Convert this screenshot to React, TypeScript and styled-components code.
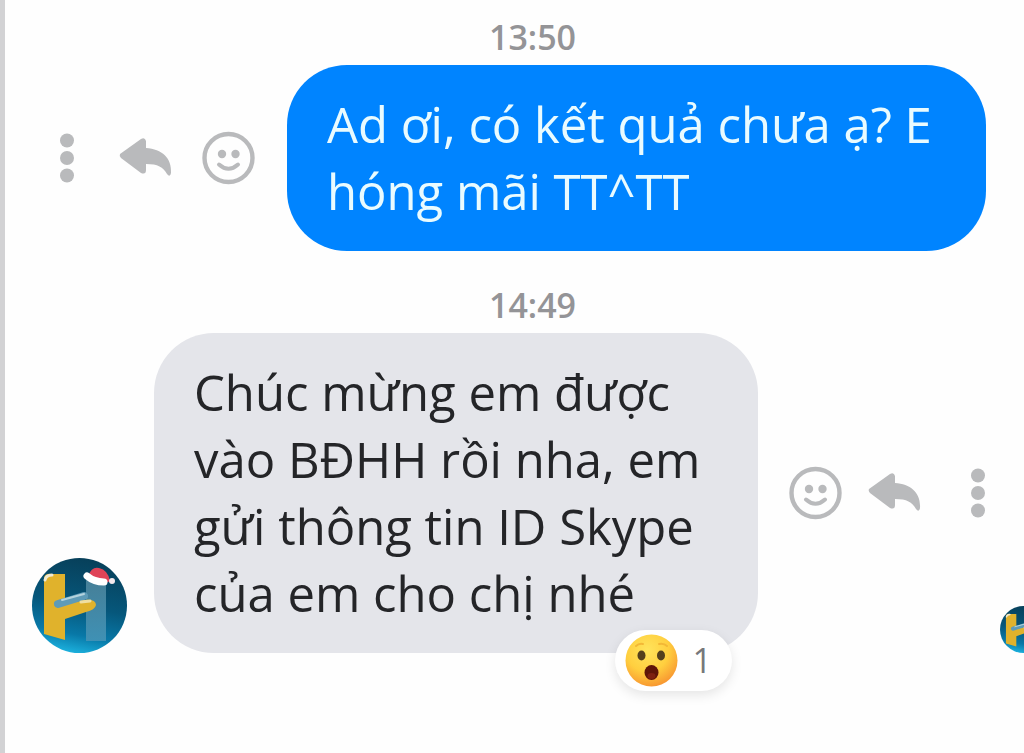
import React from "react";
import styled, { createGlobalStyle } from "styled-components";

const GlobalStyle = createGlobalStyle`
  *, *::before, *::after { box-sizing: border-box; }
  body {
    margin: 0;
    background: #fefefe;
    font-family: "Open Sans", "Noto Sans", sans-serif;
  }
`;

const Thread = styled.main`
  min-height: 100vh;
  padding-top: 11px;
  border-left: 5px solid #d2d2d4;
  overflow: hidden;
`;

const Timestamp = styled.time`
  display: block;
  padding-left: 36px;
  margin-bottom: 2px;
  color: #949497;
  font-size: 34px;
  font-weight: 600;
  line-height: 52px;
  text-align: center;
`;

const Row = styled.div<{ $own?: boolean }>`
  display: flex;
  align-items: flex-end;
  padding: ${(p) => (p.$own ? "0 38px 0 35px" : "0 0 0 27px")};
  margin-bottom: 28px;
`;

const Bubble = styled.div<{ $own?: boolean }>`
  position: relative;
  flex: 1;
  min-width: 0;
  padding: 26px 40px;
  border-radius: 60px;
  background: ${(p) => (p.$own ? "#0084ff" : "#e4e5ea")};
  color: ${(p) => (p.$own ? "#e9fbff" : "#242528")};
`;

const Message = styled.p`
  margin: 0;
  font-size: 49px;
  font-weight: 400;
  line-height: 67px;
`;

const Actions = styled.div<{ $own?: boolean }>`
  display: flex;
  flex: none;
  flex-direction: ${(p) => (p.$own ? "row-reverse" : "row")};
  align-self: center;
  gap: 27px;
  margin: ${(p) => (p.$own ? "0 31px 0 0" : "0 0 0 31px")};
`;

const IconButton = styled.button`
  display: block;
  width: 54px;
  height: 54px;
  padding: 0;
  border: 0;
  background: none;
  color: #b9babc;
  cursor: pointer;

  svg { display: block; }
`;

const Avatar = styled.svg`
  flex: none;
  display: block;
  width: 95px;
  height: 95px;
  margin-right: 27px;
`;

const SeenAvatar = styled(Avatar)`
  width: 47px;
  height: 47px;
  margin: 0 -23px 0 -5px;
`;

const Reaction = styled.button`
  position: absolute;
  right: 26px;
  bottom: -38px;
  display: flex;
  align-items: center;
  gap: 15px;
  height: 61px;
  padding: 0 20px 0 10px;
  border: 0;
  border-radius: 31px;
  background: #fff;
  box-shadow: 0 4px 12px rgba(0, 0, 0, 0.1);
  color: #77787b;
  font-family: inherit;
  font-size: 34px;
  line-height: 61px;
  cursor: pointer;
`;

function LogoArt({ id }: { id: string }) {
  return (
    <>
      <defs>
        <linearGradient id={`${id}-bg`} x1="0.6" y1="0" x2="0.4" y2="1">
          <stop offset="0" stopColor="#073f59" />
          <stop offset="0.5" stopColor="#06577b" />
          <stop offset="0.8" stopColor="#0878a7" />
          <stop offset="1" stopColor="#1cb2df" />
        </linearGradient>
        <linearGradient id={`${id}-bar`} x1="0" y1="0" x2="0" y2="1">
          <stop offset="0" stopColor="#467f97" />
          <stop offset="1" stopColor="#3f91b5" />
        </linearGradient>
      </defs>
      <circle cx="47.5" cy="47.5" r="47.5" fill={`url(#${id}-bg)`} />
      <path d="M54 22 L74 22 L74 83 L54 83 Z" fill={`url(#${id}-bar)`} />
      <path d="M12 20 Q13 15 20 16 L33 16 V46 L52 42 Q64 41 64 47 Q63 52 54 54 L33 61 V82 L12 76 Z" fill="#e0b22c" />
      <path d="M13 22 Q14 17 20 17" fill="none" stroke="#efe9d2" strokeWidth="3" strokeLinecap="round" />
      <path d="M26 46 L52 38" stroke="#5e9bb7" strokeWidth="8" strokeLinecap="round" />
      <path d="M30 42 L52 36" stroke="#b4d3dd" strokeWidth="2" strokeLinecap="round" />
      <path d="M49 44 L58 43" stroke="#efdfa1" strokeWidth="3" strokeLinecap="round" />
      <path d="M56 18 Q60 8 67 10 Q76 12 78 23 L74 25 Z" fill="#df4458" />
      <path d="M55 18 Q62 24 72 24" fill="none" stroke="#fff" strokeWidth="7" strokeLinecap="round" />
      <circle cx="80" cy="23" r="3" fill="#f4e9ed" />
    </>
  );
}

function SmileIcon() {
  return (
    <svg width="54" height="54" viewBox="0 0 54 54" fill="none" stroke="currentColor" strokeLinecap="round">
      <circle cx="26.5" cy="27" r="24" strokeWidth="4.4" />
      <path d="M17 33.500 Q26.500 42 36 33.500" strokeWidth="4" />
      <circle cx="20" cy="23" r="4.200" fill="currentColor" stroke="none" />
      <circle cx="33.500" cy="23" r="4.200" fill="currentColor" stroke="none" />
    </svg>
  );
}

function ReplyIcon() {
  return (
    <svg width="54" height="54" viewBox="0 0 54 54" fill="currentColor" overflow="visible">
      <path d="M-1 23 Q-2 25 0 27 L20 42 Q25 44 25 39 V33 C37 33 42 36 46 43 Q49 47 50 42 C51 27 41 18 25 17 V10 Q24 6 20 8 Z" />
    </svg>
  );
}

function MoreIcon() {
  return (
    <svg width="54" height="54" viewBox="0 0 54 54" fill="currentColor">
      <circle cx="27" cy="9.500" r="7" />
      <circle cx="27" cy="27" r="7" />
      <circle cx="27" cy="44.500" r="7" />
    </svg>
  );
}

function WowIcon() {
  return (
    <svg width="53" height="53" viewBox="0 0 53 53" aria-hidden="true">
      <defs>
        <radialGradient id="wow-face" cx="0.42" cy="0.3" r="0.75">
          <stop offset="0" stopColor="#ffe45c" />
          <stop offset="0.55" stopColor="#ffcf3f" />
          <stop offset="1" stopColor="#f7902f" />
        </radialGradient>
      </defs>
      <circle cx="26.500" cy="26.500" r="26" fill="url(#wow-face)" />
      <ellipse cx="16.500" cy="21.500" rx="4" ry="5" fill="#54401d" />
      <ellipse cx="36" cy="21.500" rx="4" ry="5" fill="#54401d" />
      <path d="M11 12 Q14 9 18 10 M34 10 Q39 9 42 12" fill="none" stroke="#f3b836" strokeWidth="2" strokeLinecap="round" />
      <ellipse cx="26.500" cy="38.500" rx="7" ry="7.500" fill="#5f1508" />
      <ellipse cx="26.500" cy="42" rx="4" ry="3" fill="#7e2010" />
    </svg>
  );
}

function MessageActions({ own }: { own?: boolean }) {
  return (
    <Actions $own={own}>
      <IconButton type="button" aria-label="React"><SmileIcon /></IconButton>
      <IconButton type="button" aria-label="Reply"><ReplyIcon /></IconButton>
      <IconButton type="button" aria-label="More"><MoreIcon /></IconButton>
    </Actions>
  );
}

export default function App() {
  return (
    <>
      <GlobalStyle />
      <Thread>
        <Timestamp dateTime="13:50">13:50</Timestamp>
        <Row $own>
          <MessageActions own />
          <Bubble $own>
            <Message>Ad ơi, có kết quả chưa ạ? E hóng mãi TT^TT</Message>
          </Bubble>
        </Row>
        <Timestamp dateTime="14:49">14:49</Timestamp>
        <Row>
          <Avatar viewBox="0 0 95 95" aria-hidden="true"><LogoArt id="sender" /></Avatar>
          <Bubble>
            <Message>Chúc mừng em được vào BĐHH rồi nha, em gửi thông tin ID Skype của em cho chị nhé</Message>
            <Reaction type="button">
              <WowIcon />
              <span>1</span>
            </Reaction>
          </Bubble>
          <MessageActions />
          <SeenAvatar viewBox="0 0 95 95" aria-hidden="true"><LogoArt id="seen" /></SeenAvatar>
        </Row>
      </Thread>
    </>
  );
}
